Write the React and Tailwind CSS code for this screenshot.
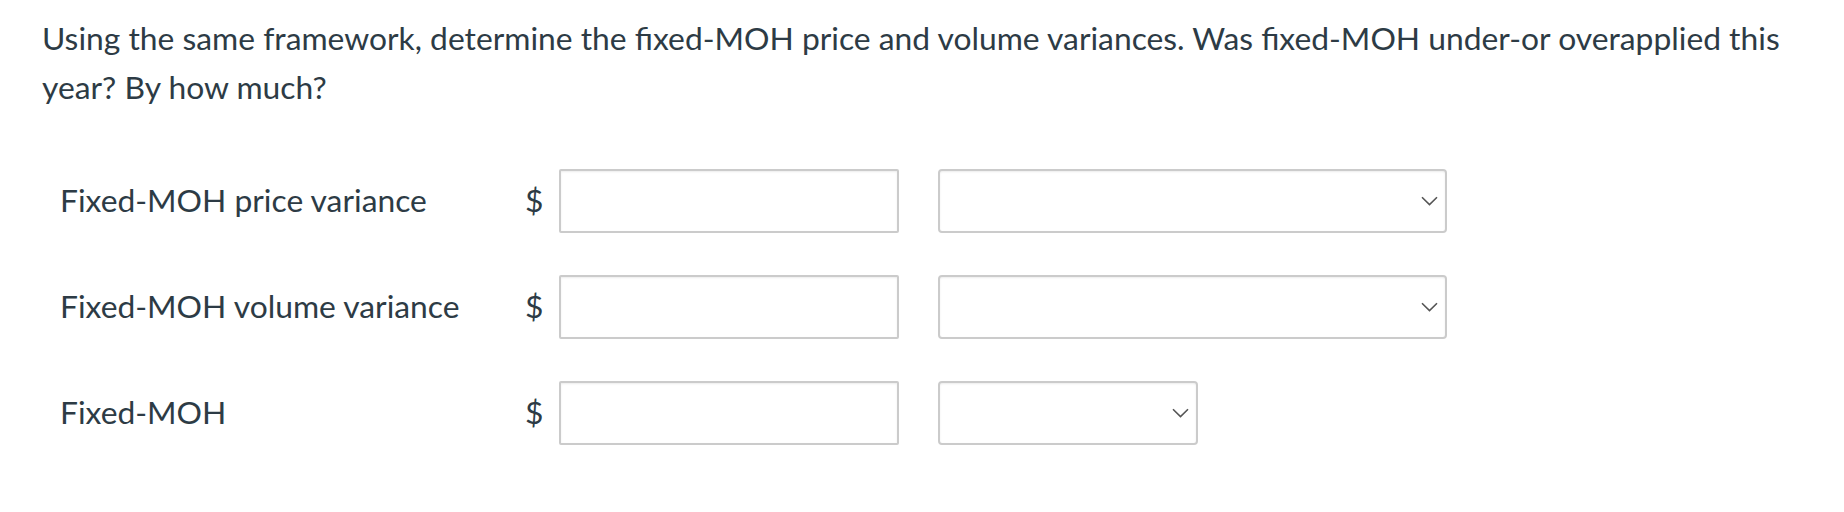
const rows = [
  { label: "Fixed-MOH price variance", selectWidth: "w-[509px]" },
  { label: "Fixed-MOH volume variance", selectWidth: "w-[509px]" },
  { label: "Fixed-MOH", selectWidth: "w-[260px]" },
];

const Chevron = () => (
  <svg width="17" height="10" viewBox="0 0 17 10" fill="none" className="shrink-0">
    <path d="M1 1.2 L8.5 8.6 L16 1.2" stroke="#555" strokeWidth="1.6" />
  </svg>
);

export default function App() {
  return (
    <div
      className="min-h-[512px] w-full bg-white px-[42px] pt-[14px] text-[#2d3b45]"
      style={{ fontFamily: "Lato, 'Open Sans', sans-serif" }}
    >
      {/* question */}
      <p className="max-w-[1760px] text-[31.8px] leading-[49px]">
        Using the same framework, determine the fixed-MOH price and volume
        variances. Was fixed-MOH under-or overapplied this year? By how much?
      </p>

      {/* answer rows */}
      <div className="mt-[57px] flex flex-col gap-[42px] pl-[18px]">
        {rows.map((row) => (
          <div key={row.label} className="flex h-[64px] items-center">
            <span className="w-[465px] text-[31.8px] leading-none">{row.label}</span>
            <span className="w-[34px] text-[31.8px] leading-none">$</span>
            <input
              type="text"
              className="h-[64px] w-[340px] rounded-[2px] border-2 border-[#cbcbcb] bg-white shadow-[inset_0_1px_2px_rgba(0,0,0,0.08)] outline-none"
            />
            <div
              className={`ml-[39px] flex h-[64px] ${row.selectWidth} items-center justify-end rounded-[4px] border-2 border-[#cbcbcb] bg-white pr-[7px] shadow-[inset_0_1px_2px_rgba(0,0,0,0.08)]`}
            >
              <Chevron />
            </div>
          </div>
        ))}
      </div>
    </div>
  );
}
